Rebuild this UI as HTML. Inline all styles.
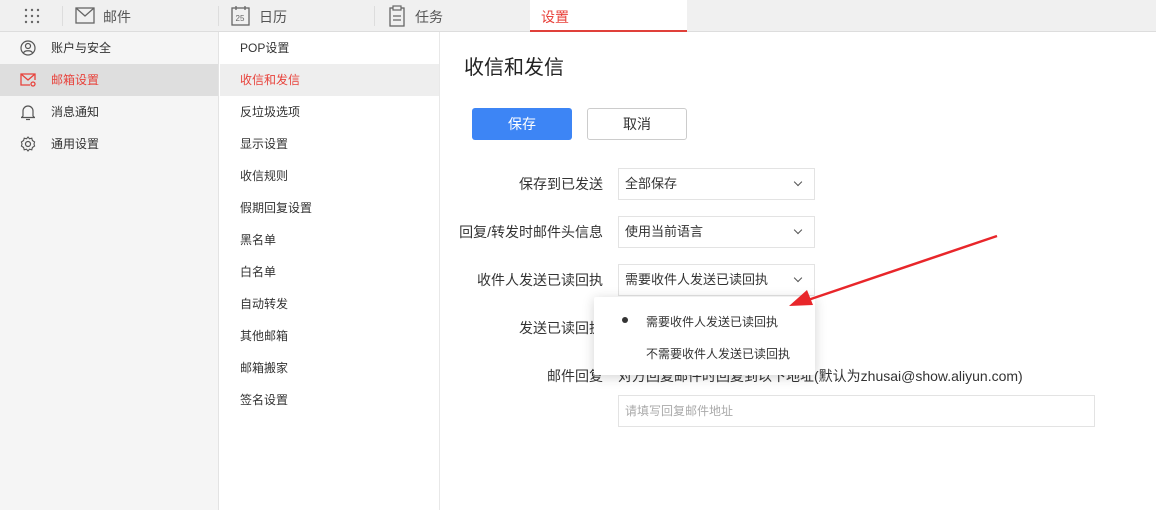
<!DOCTYPE html><html><head><meta charset="utf-8"><style>
*{margin:0;padding:0;box-sizing:border-box}
body{width:1156px;height:510px;overflow:hidden;background:#fff;font-family:"Liberation Sans","Noto Sans CJK SC",sans-serif;font-size:13px;color:#333;position:relative}
.a{position:absolute}
.top{left:0;top:0;width:1156px;height:32px;background:#f0f0f0;border-bottom:1px solid #ddd}
.sep{top:6px;width:1px;height:20px;background:#ddd}
.tab{top:7px;font-size:14px;color:#555}
.side{left:0;top:32px;width:219px;height:478px;background:#f5f5f5;border-right:1px solid #e3e3e3;font-size:12px}
.col{left:220px;top:32px;width:220px;height:478px;background:#fff;border-right:1px solid #e8e8e8;font-size:12px}
.r{position:absolute;left:0;width:100%;height:32px;line-height:32px}
.lbl{position:absolute;text-align:right;width:300px;left:303px;font-size:14px}
.sel{position:absolute;left:618px;width:197px;height:32px;border:1px solid #e3e3e3;line-height:30px;padding-left:6px;color:#333;font-size:13px}
.sel:after{content:"";position:absolute;right:13px;top:10px;width:5px;height:5px;border-right:1.3px solid #555;border-bottom:1.3px solid #555;transform:rotate(45deg)}
</style></head><body>
<div class="a top"></div>
<svg class="a" style="left:24px;top:8px" width="16" height="16"><g fill="#666"><circle cx="2" cy="2" r="1.2"/><circle cx="8" cy="2" r="1.2"/><circle cx="14" cy="2" r="1.2"/><circle cx="2" cy="8" r="1.2"/><circle cx="8" cy="8" r="1.2"/><circle cx="14" cy="8" r="1.2"/><circle cx="2" cy="14" r="1.2"/><circle cx="8" cy="14" r="1.2"/><circle cx="14" cy="14" r="1.2"/></g></svg>
<div class="a sep" style="left:62px"></div><div class="a sep" style="left:218px"></div><div class="a sep" style="left:374px"></div>
<svg class="a" style="left:75px;top:7px" width="20" height="17"><rect x="1" y="1" width="18" height="15" fill="none" stroke="#666" stroke-width="1.3"/><path d="M1 1l9 8 9-8" fill="none" stroke="#666" stroke-width="1.3"/></svg>
<div class="a tab" style="left:103px">邮件</div>
<svg class="a" style="left:231px;top:5px" width="20" height="21"><rect x="1" y="3" width="17" height="17" fill="none" stroke="#666" stroke-width="1.3"/><path d="M5 1v4M14 1v4" stroke="#666" stroke-width="1.3"/><text x="4.5" y="16" font-size="8" fill="#666" font-family="Liberation Sans">25</text></svg>
<div class="a tab" style="left:259px">日历</div>
<svg class="a" style="left:389px;top:5px" width="16" height="22"><rect x="1" y="3" width="14" height="18" fill="none" stroke="#666" stroke-width="1.3"/><rect x="4" y="1" width="8" height="4" fill="#f0f0f0" stroke="#666" stroke-width="1.2"/><path d="M4 11h8M4 15h8" stroke="#666" stroke-width="1.2"/></svg>
<div class="a tab" style="left:415px">任务</div>
<div class="a" style="left:530px;top:0;width:157px;height:32px;background:#fff;border-bottom:2px solid #e0403a"></div>
<div class="a tab" style="left:541px;color:#e8423b">设置</div>

<div class="a side">
<div class="r" style="top:0"><svg class="a" style="left:20px;top:8px" width="16" height="16"><circle cx="8" cy="8" r="7" fill="none" stroke="#555" stroke-width="1.2"/><circle cx="8" cy="6" r="2.5" fill="none" stroke="#555" stroke-width="1.2"/><path d="M3.5 13c1-3 8-3 9 0" fill="none" stroke="#555" stroke-width="1.2"/></svg><span class="a" style="left:51px">账户与安全</span></div>
<div class="r" style="top:32px;background:#dedede;color:#e8423b"><svg class="a" style="left:20px;top:9px" width="17" height="15"><path d="M10 12H1V1h14v6" fill="none" stroke="#e8423b" stroke-width="1.3"/><path d="M1 1l7 6 7-6" fill="none" stroke="#e8423b" stroke-width="1.3"/><circle cx="13" cy="11" r="2" fill="none" stroke="#e8423b" stroke-width="1.3"/></svg><span class="a" style="left:51px">邮箱设置</span></div>
<div class="r" style="top:64px"><svg class="a" style="left:21px;top:8px" width="14" height="17"><path d="M2 12V7a5 5 0 0110 0v5l1.5 1.5h-13z" fill="none" stroke="#555" stroke-width="1.2"/><path d="M5 15.5h4" stroke="#555" stroke-width="1.2"/></svg><span class="a" style="left:51px">消息通知</span></div>
<div class="r" style="top:96px"><svg class="a" style="left:20px;top:8px" width="16" height="16"><circle cx="8" cy="8" r="2.5" fill="none" stroke="#555" stroke-width="1.2"/><path d="M8 1l1.5 1.8 2.3-.6.6 2.3L14.6 6 14 8l.6 2-2.2 1.5-.6 2.3-2.3-.6L8 15l-1.5-1.8-2.3.6-.6-2.3L1.4 10 2 8l-.6-2 2.2-1.5.6-2.3 2.3.6z" fill="none" stroke="#555" stroke-width="1.1"/></svg><span class="a" style="left:51px">通用设置</span></div>
</div>

<div class="a col">
<div class="r" style="top:0;padding-left:20px">POP设置</div>
<div class="r" style="top:32px;padding-left:20px;background:#eee;color:#e8423b">收信和发信</div>
<div class="r" style="top:64px;padding-left:20px">反垃圾选项</div>
<div class="r" style="top:96px;padding-left:20px">显示设置</div>
<div class="r" style="top:128px;padding-left:20px">收信规则</div>
<div class="r" style="top:160px;padding-left:20px">假期回复设置</div>
<div class="r" style="top:192px;padding-left:20px">黑名单</div>
<div class="r" style="top:224px;padding-left:20px">白名单</div>
<div class="r" style="top:256px;padding-left:20px">自动转发</div>
<div class="r" style="top:288px;padding-left:20px">其他邮箱</div>
<div class="r" style="top:320px;padding-left:20px">邮箱搬家</div>
<div class="r" style="top:352px;padding-left:20px">签名设置</div>
</div>

<div class="a" style="left:464px;top:51px;font-size:20px;color:#222">收信和发信</div>
<div class="a" style="left:472px;top:108px;width:100px;height:32px;background:#3d85f5;border-radius:3px;color:#fff;text-align:center;line-height:32px;font-size:14px">保存</div>
<div class="a" style="left:587px;top:108px;width:100px;height:32px;border:1px solid #ccc;border-radius:3px;color:#333;text-align:center;line-height:30px;font-size:14px">取消</div>

<div class="lbl" style="top:174px">保存到已发送</div><div class="sel" style="top:168px">全部保存</div>
<div class="lbl" style="top:222px">回复/转发时邮件头信息</div><div class="sel" style="top:216px">使用当前语言</div>
<div class="lbl" style="top:270px">收件人发送已读回执</div><div class="sel" style="top:264px">需要收件人发送已读回执</div>
<div class="lbl" style="top:318px">发送已读回执</div>
<div class="lbl" style="top:366px">邮件回复</div>
<div class="a" style="left:618px;top:366px;color:#333;font-size:14px">对方回复邮件时回复到以下地址(默认为zhusai@show.aliyun.com)</div>
<div class="a" style="left:618px;top:395px;width:477px;height:32px;border:1px solid #e3e3e3;color:#aaa;font-size:12px;line-height:30px;padding-left:6px">请填写回复邮件地址</div>

<div class="a" style="left:594px;top:297px;width:221px;height:78px;background:#fff;box-shadow:0 2px 12px rgba(0,0,0,.18);border-radius:2px"></div>
<div class="a" style="left:622px;top:317px;width:6px;height:6px;border-radius:50%;background:#333"></div>
<div class="a" style="left:646px;top:313px;font-size:12px">需要收件人发送已读回执</div>
<div class="a" style="left:646px;top:345px;font-size:12px">不需要收件人发送已读回执</div>

<svg class="a" style="left:0;top:0" width="1156" height="510"><path d="M997 236L805 301" stroke="#e8262a" stroke-width="2.5"/><path d="M789 306l18-16 6 15z" fill="#e8262a"/></svg>
</body></html>
